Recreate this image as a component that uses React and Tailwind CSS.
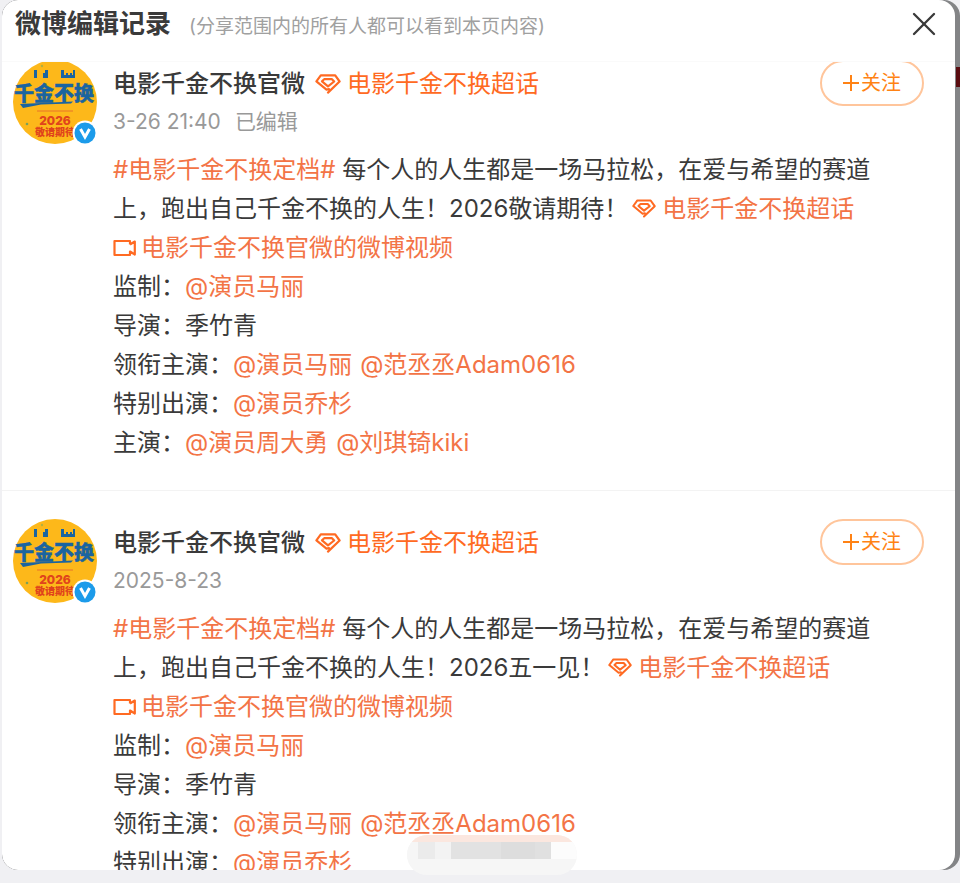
import { X } from "lucide-react";

const posts = [
  {
    id: 1,
    date: "3-26 21:40",
    edited: true,
    slogan: "2026敬请期待！",
    cast: [
      { role: "监制", people: ["@演员马丽"] },
      { role: "导演", text: "季竹青" },
      { role: "领衔主演", people: ["@演员马丽", "@范丞丞Adam0616"] },
      { role: "特别出演", people: ["@演员乔杉"] },
      { role: "主演", people: ["@演员周大勇", "@刘琪锜kiki"] },
    ],
  },
  {
    id: 2,
    date: "2025-8-23",
    edited: false,
    slogan: "2026五一见！",
    cast: [
      { role: "监制", people: ["@演员马丽"] },
      { role: "导演", text: "季竹青" },
      { role: "领衔主演", people: ["@演员马丽", "@范丞丞Adam0616"] },
      { role: "特别出演", people: ["@演员乔杉"] },
    ],
  },
];

function GemIcon({ className }) {
  return (
    <svg viewBox="0 0 26 20" className={className} fill="none" stroke="#ff6a22" strokeWidth="2.2" strokeLinejoin="round" strokeLinecap="round" aria-hidden="true">
      <path d="M13 18.6 L24.6 7.5 L20.2 1.3 H5.8 L1.4 7.3 L11.5 15.6 L14 15.2" />
      <path d="M7 7.3 L9.2 5.2 H17 L19.2 7.5 L13 12.3 Z" />
    </svg>
  );
}

function VideoIcon() {
  return (
    <svg viewBox="0 0 24 18" className="inline-block w-6 h-[18px] mr-1 align-[-1px]" fill="none" stroke="#ff6a22" strokeWidth="2.2" strokeLinejoin="round" aria-hidden="true">
      <path d="M17 5.5 V2 H1.5 V16 H17 V12.5 L21.8 15.5 V2.5 L17 5.5" />
    </svg>
  );
}

function Avatar() {
  return (
    <svg viewBox="0 0 84 84" className="w-21 h-21 shrink-0 overflow-visible" role="img" aria-label="电影千金不换官微">
      <circle cx="42" cy="42" r="42" fill="#fdb81a" />
      <g fill="#1a64a0">
        <path d="M21 10h3v8h-3zM30 13h2v-3h3v8h-5zM48 10h3v5h2v-2h2v2h2v-2h2v2h1v-5h2v8H48z" />
        <text x="1" y="41" fontSize="20" fontWeight="900" fontFamily="'Noto Sans CJK SC', sans-serif" stroke="#1a64a0" strokeWidth="0.4">千金不换</text>
        <path d="M7 44 L60 41.5 L58 43.5 L28 44.5 L10 48 Z" />
      </g>
      <path d="M24 51 H60" stroke="#e8752a" strokeWidth="1" />
      <text x="42" y="65" textAnchor="middle" fontSize="12" fontWeight="800" fill="#e0431c" fontFamily="Inter, sans-serif">2026</text>
      <text x="22" y="76" fontSize="10" fontWeight="900" fill="#e0431c" fontFamily="'Noto Sans CJK SC', sans-serif">敬请期待</text>
      <circle cx="14" cy="64" r="1.3" fill="#7aa05a" />
      <circle cx="29" cy="6" r="1.2" fill="#b3b040" />
      <circle cx="72" cy="73" r="12.5" fill="#fff" />
      <circle cx="72" cy="73" r="10.5" fill="#1c9bea" />
      <path d="M67.5 69 L72 77 L76.5 69" fill="none" stroke="#fff" strokeWidth="3" />
    </svg>
  );
}

function Post({ post }) {
  return (
    <article className="flex gap-4 pl-[11px] pr-[31px] py-7 border-b border-[#f3f3f3]">
      <Avatar />
      <div className="flex-1 min-w-0">
        <div className="flex justify-between items-start">
          <div>
            <h2 className="flex items-center gap-[10px] text-2xl leading-[48px] font-medium text-[#3a3a3a]">
              电影千金不换官微
              <a href="#topic" className="flex items-center gap-[6px] font-normal text-[#ff6a22]">
                <GemIcon className="w-[26px] h-5" />
                电影千金不换超话
              </a>
            </h2>
            <p className="flex gap-[14px] text-[21px] leading-7 text-[#999]">
              <time>{post.date}</time>
              {post.edited && <span>已编辑</span>}
            </p>
          </div>
          <button className="w-[104px] h-[46px] rounded-full border-2 border-[#ffc59b] text-xl text-[#ff8214] flex items-center justify-center gap-[2px]">
            <svg viewBox="0 0 16 16" className="w-4 h-4" stroke="currentColor" strokeWidth="2" aria-hidden="true">
              <path d="M8 0 V16 M0 8 H16" />
            </svg>
            关注
          </button>
        </div>
        <div className="mt-[14px] pr-5 text-2xl leading-[39px] text-[#3a3a3a]">
          <p>
            <a href="#tag" className="text-[#f37446]">#电影千金不换定档#</a>{" "}
            每个人的人生都是一场马拉松，在爱与希望的赛道
            <br />
            上，跑出自己千金不换的人生！{post.slogan}
            <a href="#topic" className="ml-1 text-[#f37446] whitespace-nowrap">
              <GemIcon className="inline-block w-6 h-[19px] mr-[6px] align-[-1px]" />
              电影千金不换超话
            </a>
          </p>
          <p>
            <a href="#video" className="text-[#f37446]">
              <VideoIcon />
              电影千金不换官微的微博视频
            </a>
          </p>
          {post.cast.map((row) => (
            <p key={row.role}>
              {row.role}：{row.text}
              {row.people?.map((name) => (
                <a key={name} href="#user" className="text-[#f37446] mr-2">{name}</a>
              ))}
            </p>
          ))}
        </div>
      </div>
    </article>
  );
}

// Pixelated patch over the bottom edge of the dialog
function Mosaic() {
  return (
    <div className="absolute left-[407px] bottom-2 w-[170px] h-10 rounded-[20px] overflow-hidden bg-[#f6f6f6]" aria-hidden="true">
      <div className="h-[7px] bg-[#fbe7df]" />
      <div className="flex h-[17px]">
        <div className="w-[11px] bg-[#f6f6f6]" />
        <div className="w-[17px] bg-[#ebebeb]" />
        <div className="w-4 bg-[#f3f3f3]" />
        <div className="w-[50px] bg-[#e2e2e2]" />
        <div className="w-[34px] bg-[#dddddd]" />
        <div className="w-4 bg-[#e0e0e0]" />
        <div className="flex-1 bg-[#fcfcfc]" />
      </div>
    </div>
  );
}

export default function App() {
  return (
    <div className="relative h-screen flex flex-col pl-[2px] pb-[13px] bg-[#f0f0f3] font-[Inter,'Noto_Sans_CJK_SC',sans-serif]">
      <div className="relative flex-1 min-h-0 flex rounded-2xl bg-[#838486] overflow-hidden">
        <div className="absolute right-0 top-[67px] w-1 h-5 bg-[#5a0c10]" />
        <section className="flex-1 min-w-0 mr-[5px] flex flex-col rounded-2xl bg-white overflow-hidden" role="dialog" aria-label="微博编辑记录">
          <header className="flex items-center h-[62px] shrink-0 pl-[13px] pr-[11px] pb-[14px] border-b border-[#fafafa]">
            <h1 className="text-[26px] font-bold text-[#3a3a3a]">微博编辑记录</h1>
            <p className="ml-[18px] pt-2 text-[19px] text-[#a0a0a0]">(分享范围内的所有人都可以看到本页内容)</p>
            <button className="ml-auto text-[#3a3a3a]" aria-label="关闭">
              <X size={40} strokeWidth={1.4} />
            </button>
          </header>
          <div className="flex-1 min-h-0 overflow-hidden">
            <div className="-mt-[30px]">
              {posts.map((post) => (
                <Post key={post.id} post={post} />
              ))}
            </div>
          </div>
        </section>
      </div>
      <Mosaic />
    </div>
  );
}
